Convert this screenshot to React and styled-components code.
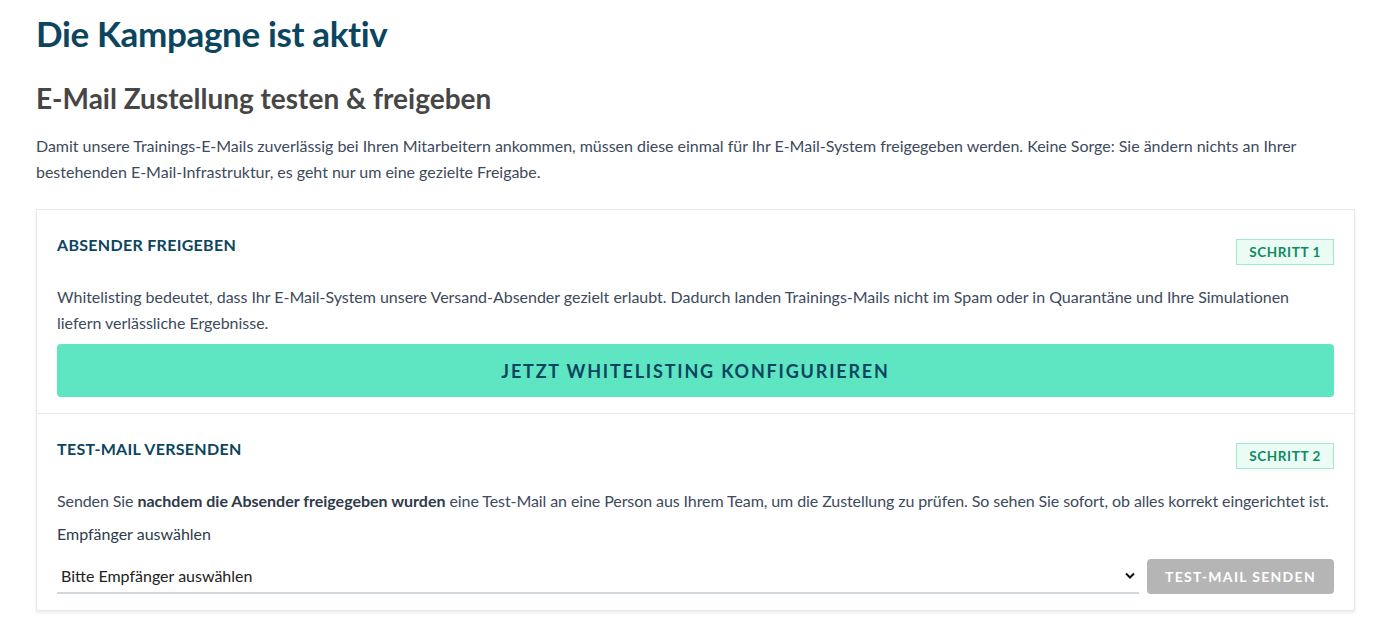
import React from "react";
import styled, { createGlobalStyle } from "styled-components";

const Global = createGlobalStyle`
  html, body { margin: 0; padding: 0; background: #fff; }
  body { font-family: Lato, "Open Sans", sans-serif; color: #3d4a5c; }
  * { box-sizing: border-box; }
`;

const Page = styled.main`
  padding: 10px 33px 16px 36px;
`;

const Title = styled.h1`
  margin: 0;
  font-size: 35px;
  line-height: 46px;
  font-weight: 700;
  color: #0b4560;
  letter-spacing: -0.35px;
`;

const Subtitle = styled.h2`
  margin: 24px 0 0;
  font-size: 28px;
  line-height: 36px;
  font-weight: 700;
  color: #464646;
`;

const Intro = styled.p`
  margin: 17px 0 0;
  font-size: 16px;
  line-height: 26px;
  letter-spacing: -0.02px;
  color: #3d4a5c;
`;

const Card = styled.section`
  margin-top: 24px;
  border: 1px solid #e4e8ef;
  box-shadow: 0 2px 3px rgba(0, 0, 0, 0.08);
  background: #fff;
`;

const Step = styled.div`
  padding: 22px 20px 16px;
  & + & {
    border-top: 1px solid #e4e8ef;
  }
`;

const StepHead = styled.div`
  display: flex;
  justify-content: space-between;
  align-items: flex-start;
`;

const StepTitle = styled.h3`
  margin: 3px 0 0;
  font-size: 16px;
  line-height: 20px;
  font-weight: 700;
  letter-spacing: 0.3px;
  color: #0b4560;
`;

const Badge = styled.span`
  margin-top: 7px;
  padding: 3px 12px;
  font-size: 13.5px;
  line-height: 18px;
  font-weight: 700;
  letter-spacing: 0.6px;
  color: #0e8a62;
  background: #eafcf4;
  border: 1px solid #9deccb;
`;

const Text = styled.p`
  margin: 19px 0 0;
  font-size: 16px;
  line-height: 26px;
  letter-spacing: ${(p) => p.$ls ?? 0}px;
  color: #3d4a5c;
  strong { font-weight: 700; color: #2f3a4a; letter-spacing: 0; }
`;

const PrimaryButton = styled.button`
  display: block;
  width: 100%;
  margin-top: 8px;
  height: 53px;
  border: 0;
  border-radius: 4px;
  background: #5ee6c3;
  color: #0b4560;
  font-family: inherit;
  font-size: 18px;
  font-weight: 700;
  letter-spacing: 1.8px;
  cursor: pointer;
`;

const Label = styled.div`
  margin-top: 10px;
  font-size: 16px;
  line-height: 20px;
  color: #2f3a4a;
`;

const FormRow = styled.div`
  display: flex;
  align-items: center;
  gap: 8px;
  margin-top: 15px;
`;

const SelectWrap = styled.div`
  position: relative;
  flex: 1;
  border-bottom: 2px solid #d3d7de;
  height: 35px;
  display: flex;
  align-items: center;
  padding: 0 4px;
  font-size: 16px;
  color: #222;
`;

const Chevron = styled.svg`
  position: absolute;
  right: 4px;
  top: 50%;
  margin-top: -4px;
`;

const GreyButton = styled.button`
  height: 35px;
  padding: 0 18px;
  border: 0;
  border-radius: 4px;
  background: #b5b5b5;
  color: #fff;
  font-family: inherit;
  font-size: 14px;
  font-weight: 700;
  letter-spacing: 1.3px;
`;

export default function App() {
  return (
    <>
      <Global />
      <Page>
        <Title>Die Kampagne ist aktiv</Title>
        <Subtitle>E-Mail Zustellung testen &amp; freigeben</Subtitle>
        <Intro>
          Damit unsere Trainings-E-Mails zuverlässig bei Ihren Mitarbeitern ankommen, müssen diese einmal für Ihr
          E-Mail-System freigegeben werden. Keine Sorge: Sie ändern nichts an Ihrer bestehenden E-Mail-Infrastruktur, es
          geht nur um eine gezielte Freigabe.
        </Intro>
        <Card>
          <Step>
            <StepHead>
              <StepTitle>ABSENDER FREIGEBEN</StepTitle>
              <Badge>SCHRITT 1</Badge>
            </StepHead>
            <Text $ls={-0.02}>
              Whitelisting bedeutet, dass Ihr E-Mail-System unsere Versand-Absender gezielt erlaubt. Dadurch landen
              Trainings-Mails nicht im Spam oder in Quarantäne und Ihre Simulationen liefern verlässliche Ergebnisse.
            </Text>
            <PrimaryButton>JETZT WHITELISTING KONFIGURIEREN</PrimaryButton>
          </Step>
          <Step>
            <StepHead>
              <StepTitle>TEST-MAIL VERSENDEN</StepTitle>
              <Badge>SCHRITT 2</Badge>
            </StepHead>
            <Text $ls={-0.09}>
              Senden Sie <strong>nachdem die Absender freigegeben wurden</strong> eine Test-Mail an eine Person aus
              Ihrem Team, um die Zustellung zu prüfen. So sehen Sie sofort, ob alles korrekt eingerichtet ist.
            </Text>
            <Label>Empfänger auswählen</Label>
            <FormRow>
              <SelectWrap>
                Bitte Empfänger auswählen
                <Chevron width="10" height="7" viewBox="0 0 10 7">
                  <path d="M1 1.5l4 4 4-4" fill="none" stroke="#111" strokeWidth="2" />
                </Chevron>
              </SelectWrap>
              <GreyButton>TEST-MAIL SENDEN</GreyButton>
            </FormRow>
          </Step>
        </Card>
      </Page>
    </>
  );
}
